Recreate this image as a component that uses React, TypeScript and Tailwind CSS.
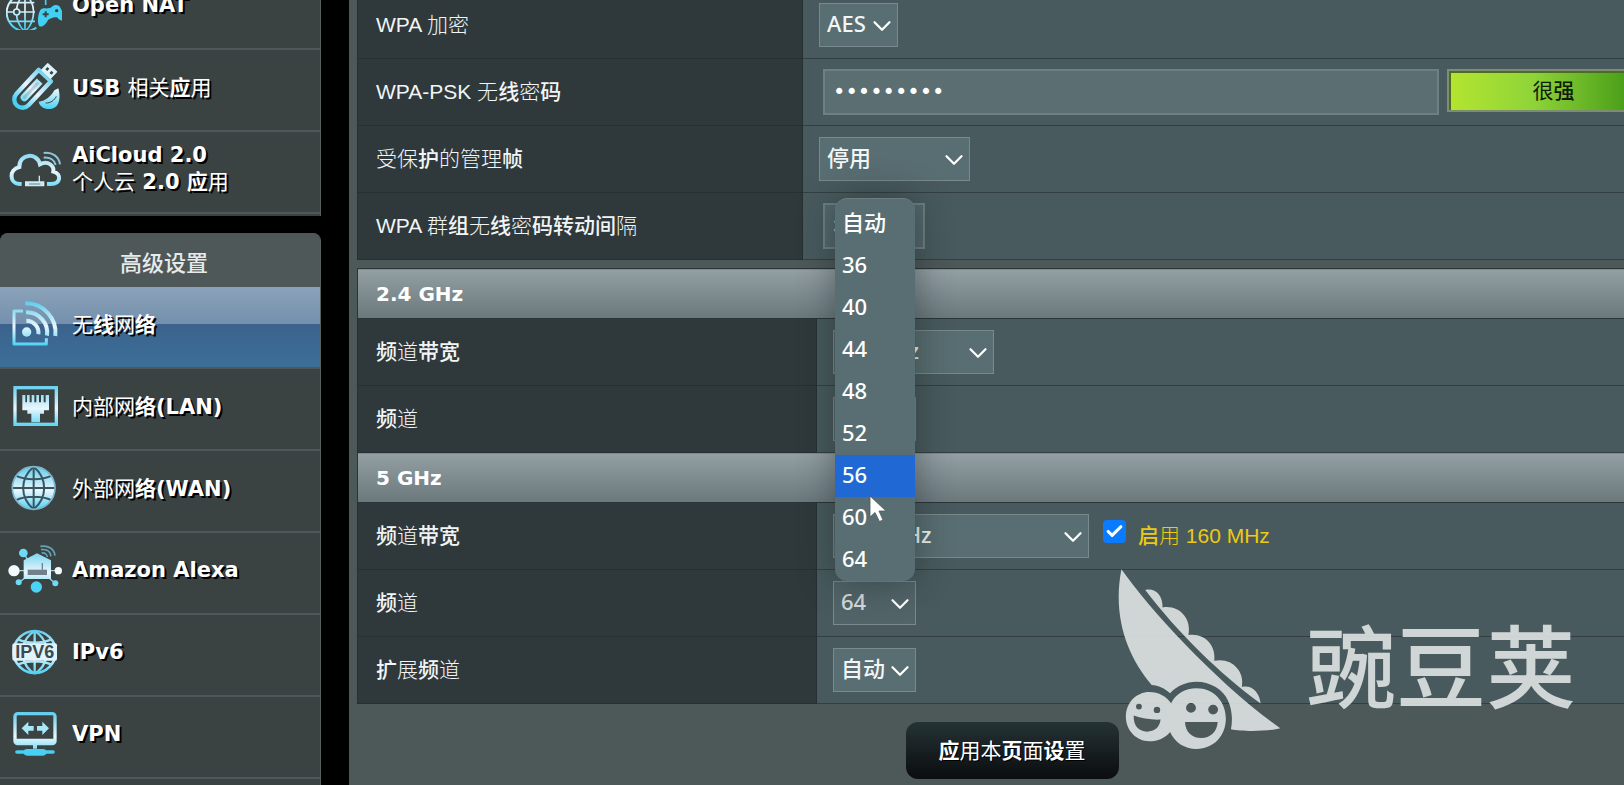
import { useId, useState, type ReactNode } from "react";
import { Check, ChevronDown } from "lucide-react";

/* ---------- text ---------- */

const HEAVY = /([应线络护帧码组转动间强频带宽扩页设启]+)/;

function Mixed({ children, light = "font-light" }: { children: string; light?: string }) {
  return (
    <>
      {children.split(HEAVY).map((part, i) => {
        if (HEAVY.test(part)) return <span key={i} className="font-medium">{part}</span>;
        return <span key={i} className={/[\u4e00-\u9fff]/.test(part) ? light : undefined}>{part}</span>;
      })}
    </>
  );
}

/* ---------- sidebar icons ---------- */

function Icon({ y, children }: { y: number; children: (paint: string) => ReactNode }) {
  const id = useId();
  return (
    <svg viewBox={`15 ${y} 168 150`} className="h-[50px] w-14" fill="none" aria-hidden="true">
      <defs>
        <linearGradient id={id} gradientUnits="userSpaceOnUse" x1="0" y1={y + 10} x2="0" y2={y + 142}>
          <stop offset="0" stopColor="#5fcdec" />
          <stop offset="0.55" stopColor="#eaf6fd" />
          <stop offset="1" stopColor="#46d0f3" />
        </linearGradient>
      </defs>
      {children(`url(#${id})`)}
    </svg>
  );
}

const NatIcon = () => (
  <Icon y={-63}>
    {(p) => (
      <>
        <g stroke={p} strokeWidth="5">
          <path d="M104 -12A56 56 0 1 0 106 80" strokeWidth="6" />
          <path d="M72 -22V91M17 33H102M24 5H100M24 61H102M72 -22C38 5 38 63 72 91M72 -22C88 -8 97 10 98 33C97 60 88 78 72 91" />
        </g>
        <circle cx="47" cy="33" r="9" fill="#3b4242" stroke={p} strokeWidth="5" />
        <path d="M134 12V-4" stroke="#46d0f3" strokeWidth="5" />
        <path d="M118 27C128 17 140 27 152 18C160 10 174 10 178 20C184 32 193 48 190 56C184 64 174 56 168 49C158 47 148 52 141 57C137 66 126 80 115 76C108 68 110 40 118 27Z" fill="#41cff2" />
        <path d="M125 40H143M134 31V49" stroke="#3b4242" strokeWidth="6" />
        <circle cx="167" cy="29" r="5" fill="#3b4242" />
      </>
    )}
  </Icon>
);

const UsbIcon = () => (
  <Icon y={183}>
    {(p) => (
      <>
        <g transform="rotate(43 92 266)">
          <path d="M67 208H117V306A25 25 0 0 1 67 306Z" stroke={p} strokeWidth="13" strokeLinejoin="round" />
          <path d="M84 234V298A8 8 0 0 0 100 298V234Z" stroke={p} strokeWidth="7" fill={p} fillOpacity="0.8" />
          <path d="M74 176H110V202H74Z" fill="#dff3fb" stroke="#dff3fb" strokeWidth="4" strokeLinejoin="round" />
          <path d="M80 184H88V193H80ZM97 184H105V193H97Z" fill="#3b4242" />
        </g>
        <path d="M172 262C180 290 176 322 148 324C130 326 116 316 113 302C134 300 150 286 160 268Z" fill={p} />
        <path d="M134 306C148 307 160 298 166 286" stroke="#3b4242" strokeWidth="3" />
      </>
    )}
  </Icon>
);

const CloudIcon = () => (
  <Icon y={429}>
    {(p) => (
      <>
        <path d="M62 549H54C26 547 22 506 55 498C54 458 108 452 117 490C142 476 160 496 157 512C184 520 178 549 150 549H138" stroke={p} strokeWidth="12" />
        <path d="M72 541H130V556H72ZM113 524H117V541H113Z" fill="#cfeaf4" />
        <path d="M84 549H118" stroke="#5f8594" strokeWidth="3" />
        <path d="M128 456C152 452 174 466 177 490M128 470C146 468 160 476 164 492" stroke="#8fc6db" strokeWidth="6" />
      </>
    )}
  </Icon>
);

const WifiIcon = () => (
  <Icon y={216}>
    {(p) => (
      <>
        <path d="M66 252H39V351H136V334" stroke={p} strokeWidth="9" strokeLinejoin="round" />
        <circle cx="77" cy="315" r="14" fill={p} />
        <path d="M76 281A36 36 0 0 1 112 322M75 256A61 61 0 0 1 138 326M73 229A88 88 0 0 1 163 327" stroke={p} strokeWidth="12" />
      </>
    )}
  </Icon>
);

const LanIcon = () => (
  <Icon y={464}>
    {(p) => (
      <>
        <rect x="42" y="484" width="124" height="110" stroke={p} strokeWidth="10" />
        <path d="M64 506H73V528H78V506H86V528H92V506H100V528H106V506H114V528H120V506H128V528H134V506H144V552H129V562H117V588H91V562H79V552H64Z" fill={p} />
      </>
    )}
  </Icon>
);

const WanIcon = () => (
  <Icon y={710}>
    {(p) => (
      <>
        <circle cx="98" cy="785" r="64" fill={p} />
        <g stroke="#3b5560" strokeWidth="6">
          <path d="M98 720V850M32 785H164M44 748C72 762 124 762 152 748M44 822C72 808 124 808 152 822" />
          <path d="M98 721C56 756 56 814 98 849M98 721C140 756 140 814 98 849" />
        </g>
        <circle cx="98" cy="785" r="64" stroke="#7fb6cb" strokeWidth="5" />
      </>
    )}
  </Icon>
);

const AlexaIcon = () => (
  <Icon y={132}>
    {(p) => (
      <>
        <path d="M40 209H172M55 243L76 228M162 246L140 228M67 156L80 176" stroke="#9fd3e4" strokeWidth="4" />
        <path d="M68 178L108 157L150 178V234H68Z" fill={p} />
        <path d="M80 206H138V222H80Z" fill="#71808c" />
        <path d="M124 186V206" stroke="#71808c" strokeWidth="4" />
        <circle cx="39" cy="209" r="17" fill="#f3fbff" />
        <circle cx="172" cy="209" r="11" fill="#f3fbff" />
        <circle cx="67" cy="156" r="13" fill="#6edbf6" />
        <circle cx="106" cy="258" r="17" fill="#4bd2f5" />
        <circle cx="53" cy="244" r="9" fill="#6edbf6" />
        <circle cx="163" cy="247" r="9" fill="#6edbf6" />
        <path d="M118 136C142 132 160 144 162 164M120 146C136 144 148 150 150 166M122 156C130 155 138 158 139 168" stroke="#64a4b8" strokeWidth="5" />
      </>
    )}
  </Icon>
);

const Ipv6Icon = () => (
  <Icon y={378}>
    {(p) => (
      <>
        <circle cx="101" cy="453" r="63" stroke={p} strokeWidth="8" />
        <path d="M101 388V520M101 390C80 402 70 420 66 440M101 390C122 402 132 420 136 440M101 518C80 506 70 488 66 468M101 518C122 506 132 488 136 468M52 416C80 428 122 428 150 416M52 490C80 478 122 478 150 490" stroke={p} strokeWidth="7" />
        <rect x="34" y="427" width="134" height="52" rx="6" fill="#dff4fc" />
        <text x="101" y="472" textAnchor="middle" className="[text-shadow:none]" fontFamily="Liberation Sans, sans-serif" fontWeight="700" fontSize="54" fill="#3b4a50">IPV6</text>
      </>
    )}
  </Icon>
);

const VpnIcon = () => (
  <Icon y={627}>
    {(p) => (
      <>
        <rect x="42" y="641" width="120" height="90" rx="8" stroke={p} strokeWidth="10" />
        <path d="M44 716H160V732H44ZM96 734H108V746H96Z" fill={p} />
        <path d="M62 685L82 665V678H98V692H82V705ZM144 685L124 665V678H108V692H124V705Z" fill="#a9e6f8" />
        <path d="M48 756H156" stroke="#46d0f3" strokeWidth="11" strokeLinecap="round" />
        <path d="M78 757H126" stroke="#46d0f3" strokeWidth="20" strokeLinecap="round" />
      </>
    )}
  </Icon>
);

/* ---------- sidebar ---------- */

type Entry = { icon: ReactNode; lines: string[]; active?: boolean };

const generalEntries: Entry[] = [
  { icon: <NatIcon />, lines: ["Open NAT"] },
  { icon: <UsbIcon />, lines: ["USB 相关应用"] },
  { icon: <CloudIcon />, lines: ["AiCloud 2.0", "个人云 2.0 应用"] },
];

const advancedEntries: Entry[] = [
  { icon: <WifiIcon />, lines: ["无线网络"], active: true },
  { icon: <LanIcon />, lines: ["内部网络(LAN)"] },
  { icon: <WanIcon />, lines: ["外部网络(WAN)"] },
  { icon: <AlexaIcon />, lines: ["Amazon Alexa"] },
  { icon: <Ipv6Icon />, lines: ["IPv6"] },
  { icon: <VpnIcon />, lines: ["VPN"] },
];

function EntryList({ entries }: { entries: Entry[] }) {
  return (
    <ul>
      {entries.map((e) => (
        <li key={e.lines[0]}>
          <a
            href="#"
            className={
              "flex h-[82px] items-center gap-1 border-b-2 border-[#4f5858] pb-1.5 text-[21px] leading-[25px] text-white [text-shadow:2px_2px_0_#000] " +
              (e.active
                ? "bg-[linear-gradient(#8ba3ba,#7490ac_46%,#3b638c_46%,#3c6f99)]"
                : "bg-[#3b4242]")
            }
          >
            <span className="flex w-[68px] shrink-0 justify-center">{e.icon}</span>
            <span className="font-['DejaVu_Sans','Noto_Sans_CJK_SC',sans-serif] font-bold">
              {e.lines.map((l) => (
                <span key={l} className="block">
                  {l.split(/([\u4e00-\u9fff]+)/).map((t, i) =>
                    /[\u4e00-\u9fff]/.test(t) ? (
                      <span key={i} className="font-['Noto_Sans_CJK_SC',sans-serif]">
                        {t.split(HEAVY).map((s, j) => (
                          <span key={j} className={HEAVY.test(s) ? "font-bold" : "font-normal"}>{s}</span>
                        ))}
                      </span>
                    ) : (
                      t
                    ),
                  )}
                </span>
              ))}
            </span>
          </a>
        </li>
      ))}
    </ul>
  );
}

function Sidebar() {
  return (
    <nav className="-mt-8 flex w-[321px] shrink-0 flex-col gap-[17px]">
      <div className="border-r border-[#566060] bg-[#3b4242] pb-0.5">
        <EntryList entries={generalEntries} />
      </div>
      <div className="overflow-hidden rounded-t-lg border-r border-[#566060] bg-[#3b4242]">
        <h2 className="flex h-[54px] items-center justify-center bg-[#4f5858] pt-0.5 pl-2 font-['Noto_Sans_CJK_SC',sans-serif] text-[22px] font-medium text-[#e6eaea]">
          高级设置
        </h2>
        <EntryList entries={advancedEntries} />
        <div className="h-20" />
      </div>
    </nav>
  );
}

/* ---------- form parts ---------- */

function Select({
  id,
  options,
  value,
  width,
  dim = false,
}: {
  id: string;
  options: string[];
  value: string;
  width: string;
  dim?: boolean;
}) {
  return (
    <span className={"relative block " + width}>
      <select
        id={id}
        defaultValue={value}
        className={
          "block h-11 w-full appearance-none border border-[#7a898b] pb-[3px] pl-[7px] font-['Noto_Sans','Noto_Sans_CJK_SC',sans-serif] text-[22px] font-medium " +
          (dim ? "bg-[#526468] text-[#d5dbdc]" : "bg-[#596e72] text-[#f2f6f6]")
        }
      >
        {options.map((o) => (
          <option key={o}>{o}</option>
        ))}
      </select>
      <ChevronDown className="pointer-events-none absolute top-2 right-px size-[30px] text-white" strokeWidth={1.8} />
    </span>
  );
}

function Row({ id, label, first, children }: { id: string; label: string; first: string; children: ReactNode }) {
  return (
    <tr className="h-[67px]">
      <th
        scope="row"
        className={"border border-[#263032] bg-[#2f393c] pl-[18px] text-left text-[21px] font-normal text-[#f2f5f5] " + first}
      >
        <label htmlFor={id}>
          <Mixed>{label}</Mixed>
        </label>
      </th>
      <td className="border border-[#333f42] bg-[#485a5d] p-0">
        <div className="flex items-center pr-1.5 pl-4">{children}</div>
      </td>
    </tr>
  );
}

function BandHeader({ children }: { children: string }) {
  return (
    <tr className="h-[50px]">
      <th
        colSpan={2}
        scope="colgroup"
        className="border border-[#2b3436] bg-linear-to-b from-[#939fa3] to-[#6a787c] pl-[18px] text-left font-['DejaVu_Sans',sans-serif] text-[20px] font-bold text-white"
      >
        {children}
      </th>
    </tr>
  );
}

const channels = ["自动", "36", "40", "44", "48", "52", "56", "60", "64"];

function ChannelMenu() {
  const [hover, setHover] = useState("56");
  return (
    <div className="absolute bottom-full left-0.5 z-10 w-20">
      <ul
        role="listbox"
        aria-label="频道"
        className="overflow-hidden rounded-xl border-t border-[#6f7d7e] bg-[#596e72] pt-1 font-['Noto_Sans','Noto_Sans_CJK_SC',sans-serif] text-[22px] leading-[39px] font-medium text-white shadow-[0_0_36px_rgba(20,28,30,0.45)]"
      >
        {channels.map((c) => (
          <li
            key={c}
            role="option"
            aria-selected={c === "64"}
            onMouseEnter={() => setHover(c)}
            className={"h-[42px] pl-[7px] " + (c === hover ? "bg-[#2069d4]" : "")}
          >
            {c}
          </li>
        ))}
      </ul>
      <svg viewBox="0 0 18 28" className="pointer-events-none absolute bottom-[58px] left-[34px] h-7 w-[18px]" aria-hidden="true">
        <path d="M1 1V22L6 17.500L10.500 26.500L14 25L10 16H17Z" fill="#fff" stroke="#4c5a5d" strokeWidth="0.8" />
      </svg>
    </div>
  );
}

/* ---------- brand mark ---------- */

function PodMark() {
  return (
    <div className="pointer-events-none absolute top-[568px] left-[1117px] z-20 flex items-start gap-6 text-[#dfe3e3] opacity-90">
      <svg viewBox="80 55 485 545" preserveAspectRatio="none" className="h-[182px] w-[165px]" fill="currentColor" aria-hidden="true">
        <path d="M93 59C180 185 380 405 560 535C530 544 450 546 415 538C424 490 412 435 370 411C325 385 270 392 236 430C220 414 202 407 182 405C110 320 66 200 93 59Z" />
        <path d="M163 121C192 114 214 135 214 173C262 165 300 205 290 256C334 248 372 284 366 333C415 322 456 362 447 411C478 404 500 430 502 461C380 370 260 250 163 121Z" />
        <path
          fillRule="evenodd"
          d="M106 500C106 458 137 426 175 426C203 426 226 440 239 460C252 432 280 415 314 415C364 415 400 455 400 506C400 558 364 597 314 597C278 597 250 577 236 546C222 564 200 574 175 574C137 574 106 542 106 500ZM129 497C128 530 146 545 168 545C190 545 206 532 208 509C180 510 152 506 129 497ZM280 516C281 546 300 564 328 564C354 564 374 546 376 516ZM136 470A8 8 0 1 0 153 470A8 8 0 1 0 136 470ZM188 480A9 9 0 1 0 207 480A9 9 0 1 0 188 480ZM283 474A14 14 0 1 0 312 474A14 14 0 1 0 283 474ZM348 479A14 14 0 1 0 377 479A14 14 0 1 0 348 479Z"
        />
      </svg>
      <span className="pt-11 font-['Noto_Sans_CJK_SC',sans-serif] text-[90px] leading-[100px] font-medium whitespace-nowrap">豌豆荚</span>
    </div>
  );
}

/* ---------- page ---------- */

export default function App() {
  return (
    <div className="relative flex h-screen gap-7 overflow-hidden bg-black font-['Liberation_Sans','Noto_Sans_CJK_SC',sans-serif]">
      <Sidebar />
      <main className="min-w-[1318px] flex-1 bg-[#4d5859] pl-2">
        <form className="-mt-[9px]" onSubmit={(e) => e.preventDefault()}>
          <table className="w-full border-collapse">
            <tbody>
              <Row id="wpa-enc" label="WPA 加密" first="w-[445px]">
                <Select id="wpa-enc" options={["AES", "TKIP+AES"]} value="AES" width="w-[79px]" />
              </Row>
              <Row id="psk" label="WPA-PSK 无线密码" first="w-[445px]">
                <input
                  id="psk"
                  type="password"
                  defaultValue="password1"
                  className="ml-1 h-[46px] min-w-0 flex-1 border-2 border-[#6d8083] bg-[#5b6f73] pl-2 font-['DejaVu_Sans',sans-serif] text-[21px] text-white"
                />
                <span className="mb-1 ml-2 flex h-[43px] w-[213px] items-center justify-center border-2 border-[#7d8d70] bg-linear-to-r from-[#b4e52f] via-[#8fd438] via-40% to-[#2f8d0c] pt-0.5 text-[21px] text-[#101c08] shadow-[inset_2px_2px_0_#4c6b25]">
                  <Mixed light="font-normal">很强</Mixed>
                </span>
              </Row>
              <Row id="mfp" label="受保护的管理帧" first="w-[445px]">
                <Select id="mfp" options={["停用", "启用"]} value="停用" width="w-[151px]" />
              </Row>
              <Row id="rekey" label="WPA 群组无线密码转动间隔" first="w-[445px]">
                <input
                  id="rekey"
                  type="text"
                  defaultValue="3600"
                  className="ml-1 h-[46px] w-[102px] border-2 border-[#6d8083] bg-[#54686c] pl-2 text-[21px] text-[#b9c4c6]"
                />
              </Row>
            </tbody>
          </table>

          <table className="mt-2 w-full border-collapse">
            <tbody>
              <BandHeader>2.4 GHz</BandHeader>
              <Row id="bw24" label="频道带宽" first="w-[459px]">
                <Select id="bw24" options={["20 MHz", "40 MHz"]} value="20 MHz" width="w-[161px]" />
              </Row>
              <Row id="ch24" label="频道" first="w-[459px]">
                <Select id="ch24" options={["自动", "1", "6", "11"]} value="自动" width="w-[83px]" />
              </Row>
              <BandHeader>5 GHz</BandHeader>
              <Row id="bw5" label="频道带宽" first="w-[459px]">
                <Select id="bw5" options={["160 MHz", "80 MHz"]} value="160 MHz" width="w-64" />
                <span className="relative mb-2.5 ml-3.5 block size-[23px]">
                  <input
                    id="en160"
                    type="checkbox"
                    defaultChecked
                    className="peer block size-[23px] appearance-none rounded bg-[#e9eded] checked:bg-[#0a7aff]"
                  />
                  <Check className="pointer-events-none absolute inset-0.5 hidden size-[19px] text-white peer-checked:block" strokeWidth={4} />
                </span>
                <label htmlFor="en160" className="ml-3 text-[21px] text-[#ecca12]">
                  <Mixed>启用 160 MHz</Mixed>
                </label>
              </Row>
              <Row id="ch5" label="频道" first="w-[459px]">
                <div className="relative">
                  <Select id="ch5" options={channels} value="64" width="w-[83px]" dim />
                  <ChannelMenu />
                </div>
              </Row>
              <Row id="ext" label="扩展频道" first="w-[459px]">
                <Select id="ext" options={["自动"]} value="自动" width="w-[83px]" />
              </Row>
            </tbody>
          </table>

          <div className="flex justify-center pt-[18px]">
            <button
              type="submit"
              className="h-[57px] w-[213px] rounded-xl bg-linear-to-b from-[#253335] to-[#0b0d0f] text-[21px] text-white [text-shadow:1px_1px_0_#000]"
            >
              {"应用本页面设置".split(HEAVY).map((s, i) => (
                <span key={i} className={HEAVY.test(s) ? "font-bold" : "font-normal"}>{s}</span>
              ))}
            </button>
          </div>
        </form>
      </main>
      <PodMark />
    </div>
  );
}
